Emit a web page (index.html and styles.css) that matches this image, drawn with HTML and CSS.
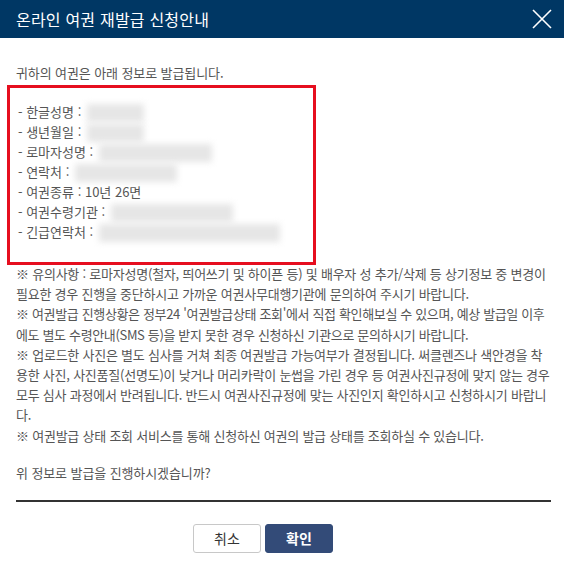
FILE: index.html
```html
<!DOCTYPE html>
<html lang="ko">
<head>
<meta charset="utf-8">
<link rel="stylesheet" href="styles.css">
</head>
<body>
<div class="dialog">
  <div class="header">
    <h1 class="title">온라인 여권 재발급 신청안내</h1>
    <button class="close" aria-label="닫기">
      <svg width="20" height="20" viewBox="0 0 20 20"><path d="M1 1 L19 19 M19 1 L1 19" stroke="#fff" stroke-width="1.6" fill="none"/></svg>
    </button>
  </div>
  <div class="content">
    <p class="lead">귀하의 여권은 아래 정보로 발급됩니다.</p>
    <div class="info-box">
      <div class="row">- 한글성명 : <span class="blur w57"></span></div>
      <div class="row">- 생년월일 : <span class="blur w57"></span></div>
      <div class="row">- 로마자성명 : <span class="blur w113"></span></div>
      <div class="row">- 연락처 : <span class="blur w102"></span></div>
      <div class="row">- 여권종류 : 10년 26면</div>
      <div class="row">- 여권수령기관 : <span class="blur w122"></span></div>
      <div class="row">- 긴급연락처 : <span class="blur w181"></span></div>
    </div>
    <div class="notes">
      <p>※ 유의사항 : 로마자성명(철자, 띄어쓰기 및 하이픈 등) 및 배우자 성 추가/삭제 등 상기정보 중 변경이 필요한 경우 진행을 중단하시고 가까운 여권사무대행기관에 문의하여 주시기 바랍니다.</p>
      <p class="tight">※ 여권발급 진행상황은 정부24 '여권발급상태 조회'에서 직접 확인해보실 수 있으며, 예상 발급일 이후에도 별도 수령안내(SMS 등)을 받지 못한 경우 신청하신 기관으로 문의하시기 바랍니다.</p>
      <p>※ 업로드한 사진은 별도 심사를 거쳐 최종 여권발급 가능여부가 결정됩니다. 써클렌즈나 색안경을 착용한 사진, 사진품질(선명도)이 낮거나 머리카락이 눈썹을 가린 경우 등 여권사진규정에 맞지 않는 경우 모두 심사 과정에서 반려됩니다. 반드시 여권사진규정에 맞는 사진인지 확인하시고 신청하시기 바랍니다.</p>
      <p>※ 여권발급 상태 조회 서비스를 통해 신청하신 여권의 발급 상태를 조회하실 수 있습니다.</p>
    </div>
    <p class="question">위 정보로 발급을 진행하시겠습니까?</p>
    <div class="divider"></div>
    <div class="buttons">
      <button class="btn btn-cancel">취소</button>
      <button class="btn btn-ok">확인</button>
    </div>
  </div>
</div>
</body>
</html>
```

FILE: styles.css
```css
* { box-sizing: border-box; }
html, body { margin: 0; padding: 0; background: #fff; }
body {
  font-family: "Noto Sans CJK KR", "Noto Sans", sans-serif;
  color: #555;
  font-size: 13px;
}
.dialog { width: 564px; }
.header {
  height: 38px;
  background: #003764;
  display: flex;
  align-items: center;
  justify-content: space-between;
  padding: 0 12px 0 16px;
}
.title {
  margin: 0;
  color: #fff;
  font-size: 16px;
  font-weight: 400;
  line-height: 20px;
  letter-spacing: 0.2px;
}
.close {
  background: none;
  border: 0;
  padding: 0;
  width: 20px;
  height: 20px;
  display: flex;
}
.content { padding: 25px 13px 0 16px; }
p { margin: 0; }
.lead { line-height: 20px; letter-spacing: -0.1px; }
.info-box {
  margin: 2px 0 0 -9px;
  width: 309px;
  border: 3px solid #e60e1f;
  padding: 14px 8px 20px 8px;
}
.row { line-height: 20px; height: 20px; white-space: nowrap; letter-spacing: 0; }
.blur {
  display: inline-block;
  height: 18px;
  vertical-align: middle;
  background: #e6e6e6;
  filter: blur(3px);
  margin-left: 2px;
}
.w57 { width: 57px; }
.w102 { width: 102px; }
.w113 { width: 113px; }
.w122 { width: 122px; }
.w181 { width: 181px; }
.notes { margin-top: -1px; line-height: 20.2px; letter-spacing: -0.23px; }
.notes .tight { letter-spacing: -0.35px; }
.question { margin-top: 17px; line-height: 20px; letter-spacing: -0.1px; }
.divider { margin-top: 17px; height: 2px; background: #333; }
.buttons { display: flex; gap: 4px; margin: 22px 0 0 177px; }
.btn {
  width: 68px;
  height: 29px;
  border-radius: 3px;
  font-family: inherit;
  font-size: 14px;
  padding: 0;
}
.btn-cancel { background: #fff; border: 1px solid #c8c8c8; color: #333; }
.btn-ok { background: #334b78; border: 1px solid #334b78; color: #fff; font-weight: 700; }
```
